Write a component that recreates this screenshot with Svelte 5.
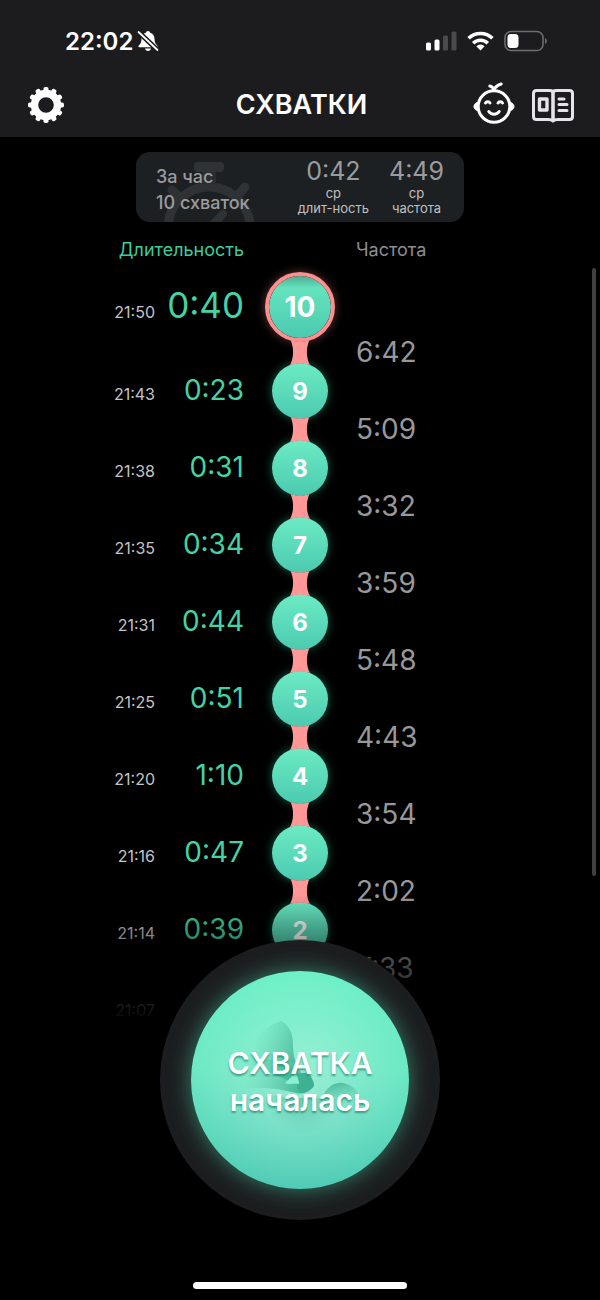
<script>
    const contractions = [
        { number: 10, time: '21:50', duration: '0:40', frequency: '6:42' },
        { number: 9, time: '21:43', duration: '0:23', frequency: '5:09' },
        { number: 8, time: '21:38', duration: '0:31', frequency: '3:32' },
        { number: 7, time: '21:35', duration: '0:34', frequency: '3:59' },
        { number: 6, time: '21:31', duration: '0:44', frequency: '5:48' },
        { number: 5, time: '21:25', duration: '0:51', frequency: '4:43' },
        { number: 4, time: '21:20', duration: '1:10', frequency: '3:54' },
        { number: 3, time: '21:16', duration: '0:47', frequency: '2:02' },
        { number: 2, time: '21:14', duration: '0:39', frequency: '7:33' },
        { number: 1, time: '21:07', duration: '0:36', frequency: '' }
    ];

    const teeth = [0, 30, 60, 90, 120, 150, 180, 210, 240, 270, 300, 330];
</script>

<div class="screen">
    <header>
        <div class="status-bar">
            <div class="clock">
                <span>22:02</span>
                <svg width="22" height="22" viewBox="0 0 22 22" aria-hidden="true">
                    <path fill="#fff" d="M11 1c1.200 0 2 .8 2.100 1.700 2.900.8 4.300 3.100 4.400 6.300.1 3.600 1 5 2.700 6.500.8.8.4 1.700-.6 1.700H2.400c-1 0-1.400-.9-.6-1.700C3.500 14 4.400 12.600 4.500 9c.1-3.200 1.500-5.500 4.400-6.300C9 1.800 9.800 1 11 1zM8 18.500h6c-.3 1.500-1.500 2.400-3 2.400s-2.700-.9-3-2.400z" />
                    <path stroke="#1c1c1e" stroke-width="5" d="M1 1.500l20 19" />
                    <path stroke="#fff" stroke-width="1.800" stroke-linecap="round" d="M1.500 2l19 18" />
                </svg>
            </div>
            <div class="signals">
                <svg width="31" height="20" viewBox="0 0 31 20" aria-hidden="true">
                    <rect x="0" y="11.500" width="5" height="8" rx="1.500" fill="#fff" />
                    <rect x="8.500" y="8.500" width="5" height="11" rx="1.500" fill="#fff" />
                    <rect x="17" y="4.500" width="5" height="15" rx="1.500" fill="#4a4a4c" />
                    <rect x="25.500" y="0.500" width="5" height="19" rx="1.500" fill="#4a4a4c" />
                </svg>
                <svg width="27" height="20" viewBox="0 0 27 20" aria-hidden="true">
                    <g fill="none" stroke="#fff" stroke-width="3.600">
                        <path d="M1.600 7.300a17 17 0 0 1 23.800 0" />
                        <path d="M6.200 12.200a10.400 10.400 0 0 1 14.600 0" />
                    </g>
                    <path fill="#fff" d="M13.500 19.500l-4.200-4.200a6 6 0 0 1 8.400 0z" />
                </svg>
                <svg width="44" height="22" viewBox="0 0 44 22" aria-hidden="true">
                    <rect x="1" y="1.500" width="38" height="19" rx="6" fill="none" stroke="#6c6c6e" stroke-width="1.600" />
                    <rect x="3.500" y="4" width="11" height="14" rx="3.500" fill="#fff" />
                    <path fill="#6c6c6e" d="M41 8c2.500.8 2.500 5.200 0 6z" />
                </svg>
            </div>
        </div>

        <nav class="toolbar">
            <div class="tools">
                <button class="icon-btn" aria-label="Настройки">
                    <svg width="36" height="38" viewBox="-18 -20 36 38">
                        {#each teeth as angle}
                            <rect x="-2.500" y="-18" width="5" height="8" rx="1.800" fill="#fff" transform="rotate({angle})" />
                        {/each}
                        <circle r="11.500" fill="none" stroke="#fff" stroke-width="7.400" />
                    </svg>
                </button>
            </div>
            <h1>СХВАТКИ</h1>
            <div class="tools right">
                <button class="icon-btn" aria-label="Малыш">
                    <svg width="42" height="44" viewBox="0 2 42 44">
                        <g fill="none" stroke="#fff" stroke-width="3" stroke-linecap="round">
                            <circle cx="21" cy="26.500" r="15.800" />
                            <path d="M21 10.500C20.500 8 19 6.500 16.800 6M21 9.500c1.500-3 4-4.500 7.200-5.500" />
                            <path d="M12.500 23c.8-1.800 3.700-1.800 4.500 0M25 23c.8-1.800 3.700-1.800 4.500 0" />
                            <path d="M15.800 31.500c2.500 3.700 7.900 3.700 10.400 0" />
                        </g>
                        <path fill="#fff" d="M6 21.500c-2.500.3-5.500 2.500-5.500 5s3 4.700 5.500 5zM36 21.500c2.500.3 5.500 2.500 5.500 5s-3 4.700-5.500 5z" />
                    </svg>
                </button>
                <button class="icon-btn" aria-label="Статьи">
                    <svg width="44" height="44" viewBox="0 0 44 44">
                        <g fill="none" stroke="#e6e4e8" stroke-width="3" stroke-linejoin="round" stroke-linecap="round">
                            <path d="M22 9.500c-1-1-2-1-4-1H5.500c-2.500 0-3 1-3 3v23c0 2 .5 3 3 3H17c2.500 0 4 .2 5 1.500 1-1.300 2.500-1.500 5-1.500h11.500c2.500 0 3-1 3-3v-23c0-2-.5-3-3-3H26c-2 0-3 0-4 1z" />
                            <path stroke-width="3.600" d="M22 10v28" />
                            <path d="M8.500 17h7.500v11H8.500z" stroke-width="3.400" />
                            <path d="M28 17h5M28 22.500h8M28 28.500h8" />
                        </g>
                    </svg>
                </button>
            </div>
        </nav>
    </header>

    <main>
        <section class="summary">
            <svg class="stopwatch" width="100" height="60" viewBox="0 0 100 60" aria-hidden="true">
                <rect x="33" y="0" width="30" height="10" rx="4" fill="#2f3235" />
                <g fill="none" stroke="#2f3235" stroke-linecap="round">
                    <circle cx="48" cy="66" r="41" stroke-width="9" />
                    <path stroke-width="9" d="M11 28l7 7M84 25l-7 8" />
                    <path stroke-width="8" d="M48 66l14-14" />
                </g>
                <rect x="41" y="10" width="14" height="12" fill="#2a2d30" />
            </svg>
            <div class="total">
                <p>За час</p>
                <p>10 схваток</p>
            </div>
            <dl>
                <div>
                    <dt>ср<br />длит-ность</dt>
                    <dd>0:42</dd>
                </div>
                <div>
                    <dt>ср<br />частота</dt>
                    <dd>4:49</dd>
                </div>
            </dl>
        </section>

        <div class="columns">
            <h2 class="green">Длительность</h2>
            <h2>Частота</h2>
        </div>

        <ol class="timeline">
            {#each contractions as item, i (item.number)}
                <li class:latest={i === 0}>
                    <div class="measure">
                        <time>{item.time}</time>
                        <span class="duration">{item.duration}</span>
                    </div>
                    <div class="node">
                        <span class="ball">{item.number}</span>
                        {#if item.frequency}
                            <svg class="link" width="24" height="25" viewBox="0 0 24 25" aria-hidden="true">
                                <path fill="#ff9797" d="M2.500 0q9.500 3 19 0c-3.500 7-3.500 18 .5 25q-10-3-20 0c4-7 4-18 .5-25z" />
                            </svg>
                        {/if}
                    </div>
                    <span class="frequency">{item.frequency}</span>
                </li>
            {/each}
        </ol>

        <div class="scroll-thumb"></div>
    </main>

    <footer>
        <div class="start-ring">
            <button class="start-btn">
                <svg class="petals" viewBox="0 0 218 218" aria-hidden="true">
                    <defs>
                        <linearGradient id="petal-top" gradientUnits="userSpaceOnUse" x1="104" y1="84" x2="64" y2="68">
                            <stop offset="0" stop-color="#47b899" stop-opacity="0.85" />
                            <stop offset="1" stop-color="#58c9a9" stop-opacity="0" />
                        </linearGradient>
                        <linearGradient id="petal-left" gradientUnits="userSpaceOnUse" x1="118" y1="110" x2="56" y2="98">
                            <stop offset="0" stop-color="#35b090" />
                            <stop offset="0.4" stop-color="#45b999" stop-opacity="0.6" />
                            <stop offset="1" stop-color="#58c9a9" stop-opacity="0" />
                        </linearGradient>
                        <linearGradient id="petal-right" gradientUnits="userSpaceOnUse" x1="146" y1="112" x2="152" y2="134">
                            <stop offset="0" stop-color="#4cb89b" stop-opacity="0.9" />
                            <stop offset="1" stop-color="#58c9a9" stop-opacity="0" />
                        </linearGradient>
                        <radialGradient id="petal-low" gradientUnits="userSpaceOnUse" cx="112" cy="124" r="40">
                            <stop offset="0" stop-color="#4bbb9f" stop-opacity="0.7" />
                            <stop offset="1" stop-color="#58c9a9" stop-opacity="0" />
                        </radialGradient>
                    </defs>
                    <path fill="url(#petal-top)" d="M90 50c9 5 12 13 12 24 0 12 3 22 10 30l-14 6-40-18c-3-20 14-36 32-42z" />
                    <path fill="url(#petal-left)" d="M50 92c20-8 44-4 60 12 10 2 12 8 10 14-6 6-12 5-20 3-20-5-36-5-52-3z" />
                    <path fill="url(#petal-right)" d="M128 132c5-13 14-22 24-20 8 2 13 6 16 11-4 8-14 16-24 20-8 0-13-4-16-11z" />
                    <path fill="url(#petal-low)" d="M69 120c20 10 62 6 92 8-8 26-28 40-52 39-20-2-35-19-40-47z" />
                    <path fill="#3eb193" d="M107 104c7-6 14 1 15 6 3 6-1 8-6 10-4 2-8 0-10-3z" />
                    <path fill="#8af0d0" d="M94 112c4-3 6-7 10-9 3 2 4 7 4 10-5-1-10 1-14-1z" />
                </svg>
                <span class="start-text">СХВАТКА<br />началась</span>
            </button>
        </div>
        <div class="home-indicator"></div>
    </footer>
</div>

<style>
    :global(body) {
        margin: 0;
        background: #000;
    }
    .screen {
        min-height: 100vh;
        background: #000;
        color: #fff;
        font-family: Inter, 'Noto Sans', sans-serif;
    }
    h1, h2, p, dl, dd, ol {
        margin: 0;
        padding: 0;
        font-weight: 400;
    }
    svg {
        display: block;
    }
    button {
        padding: 0;
        border: none;
        background: none;
        color: inherit;
        font-family: inherit;
        cursor: pointer;
    }

    /* Header */
    header {
        background: #1c1c1e;
        padding-bottom: 11px;
    }
    .status-bar {
        display: flex;
        justify-content: space-between;
        align-items: center;
        height: 82px;
        padding: 0 52px 0 65px;
    }
    .clock {
        display: flex;
        align-items: center;
        gap: 4px;
        font-size: 24px;
        font-weight: 600;
    }
    .signals {
        display: flex;
        align-items: center;
        gap: 10px;
    }
    .toolbar {
        display: grid;
        grid-template-columns: 1fr auto 1fr;
        align-items: center;
        height: 44px;
        padding: 0 25px 0 28px;
    }
    .tools {
        display: flex;
        align-items: center;
        gap: 16px;
    }
    .right {
        justify-content: flex-end;
    }
    h1 {
        font-size: 27px;
        font-weight: 600;
    }

    /* Summary card */
    main {
        position: relative;
        padding: 15px 0 240px;
    }
    .summary {
        position: relative;
        display: flex;
        justify-content: space-between;
        align-items: flex-end;
        box-sizing: border-box;
        width: 328px;
        height: 70px;
        margin: 0 auto;
        padding: 0 20px 6px;
        border-radius: 14px;
        background: #1d2023;
        color: #9b9b9d;
        overflow: hidden;
    }
    .stopwatch {
        position: absolute;
        left: 25px;
        bottom: 0;
    }
    .total {
        position: relative;
        font-size: 18px;
        line-height: 26px;
    }
    .total p {
        font-weight: 500;
    }
    dl {
        display: flex;
        gap: 20px;
        text-align: center;
    }
    dl div {
        display: flex;
        flex-direction: column-reverse;
    }
    dt {
        color: #c0c0c2;
        font-size: 13px;
        line-height: 15px;
    }
    dd {
        font-size: 25px;
        line-height: 29px;
    }

    /* Timeline */
    .columns {
        display: grid;
        grid-template-columns: 1fr 1fr;
        column-gap: 112px;
        padding: 15px 0 13px;
    }
    h2 {
        color: #8e8e90;
        font-size: 18px;
        line-height: 26px;
    }
    .green {
        color: #3ecb9c;
        text-align: right;
    }
    .timeline {
        list-style: none;
        /* the first ball rises a little into the headings row */
        margin-top: -4px;
    }
    li {
        display: grid;
        grid-template-columns: 1fr 112px 1fr;
        align-items: start;
    }
    .measure {
        display: flex;
        justify-content: flex-end;
        align-items: baseline;
        line-height: 55px;
    }
    .latest .measure {
        line-height: 67px;
    }
    time {
        color: #c4c4c6;
        font-size: 16px;
    }
    .duration {
        width: 89px;
        color: #44d3a5;
        font-size: 28px;
        text-align: right;
    }
    .latest .duration {
        font-size: 35px;
    }
    .node {
        display: flex;
        flex-direction: column;
        align-items: center;
    }
    .ball {
        display: flex;
        justify-content: center;
        align-items: center;
        box-sizing: border-box;
        width: 56px;
        height: 56px;
        border-radius: 50%;
        background: linear-gradient(#6cebc4, #4ccab0);
        box-shadow: 0 0 10px #2f9c7c99;
        font-size: 24px;
        font-weight: 700;
    }
    .latest .ball {
        width: 70px;
        height: 70px;
        border: 4px solid #ff8f8f;
        background: linear-gradient(#4fae93, #64e3be 20%, #4ccab0) padding-box;
        box-shadow: 0 0 10px #ff8f8f66;
        font-size: 28px;
    }
    .link {
        position: relative;
        z-index: 1;
        margin: -2px 0;
    }
    .frequency {
        align-self: end;
        color: #98989a;
        font-size: 28px;
        line-height: 21px;
    }
    .scroll-thumb {
        position: absolute;
        top: 131px;
        right: 4px;
        width: 4px;
        height: 608px;
        border-radius: 2px;
        background: #404040;
    }

    /* Bottom dock */
    footer {
        position: fixed;
        left: 0;
        right: 0;
        bottom: 0;
        z-index: 2;
        display: flex;
        flex-direction: column;
        align-items: center;
        gap: 62px;
        padding: 46px 0 11px;
        background: linear-gradient(transparent, #000 130px);
    }
    .start-ring {
        display: flex;
        justify-content: center;
        align-items: center;
        width: 280px;
        height: 280px;
        border-radius: 50%;
        background: #1c1d1f;
    }
    .start-btn {
        position: relative;
        box-sizing: border-box;
        width: 218px;
        height: 218px;
        padding-top: 4px;
        border-radius: 50%;
        background:
            radial-gradient(circle, #ffffff55, #ffffff00 75%),
            linear-gradient(#6bf0c5, #69e8c2 45%, #4ccab4);
        box-shadow: 0 0 22px #46c79d99;
        font-size: 30px;
        font-weight: 600;
        line-height: 37px;
        text-shadow: 0 2px 2px #1f7a66aa;
    }
    .petals {
        position: absolute;
        inset: 0;
    }
    .start-text {
        position: relative;
    }
    .home-indicator {
        width: 214px;
        height: 7px;
        border-radius: 4px;
        background: #fff;
    }
</style>
